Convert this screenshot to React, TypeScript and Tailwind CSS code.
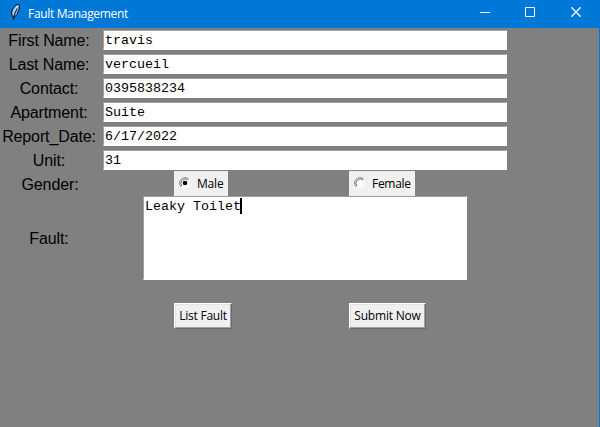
import type { ReactNode } from 'react';

const ui = "font-['Open_Sans','Noto_Sans',sans-serif] text-[12px] leading-4 whitespace-nowrap";
const mono = "font-['Liberation_Mono',monospace] text-[13.33px] leading-4 text-black whitespace-pre";

function Feather() {
  return (
    <svg width="16" height="28" viewBox="0 0 16 28" className="ml-[7px] shrink-0">
      <path d="M10 4.5h2l.5 1-.5 4-2 5-2.5 2.5h-2L4.500 14l.5-4L7.500 6.500Z" fill="#7fb0ea" stroke="#07111f" strokeWidth="1" />
      <path d="M10.500 6 8 10 6.500 14.500" fill="none" stroke="#d5e9ff" strokeWidth="1.200" />
      <path d="M10 8.500 7.500 14 6.500 20" fill="none" stroke="#07111f" strokeWidth="1" />
    </svg>
  );
}

function TitleBar() {
  return (
    <header className="flex h-7 items-center bg-[#0078d7] text-white">
      <Feather />
      <h1 className={`${ui} mb-px ml-[5px] w-[101px] tracking-[-0.3px]`}>Fault Management</h1>
      <div className="ml-auto flex" aria-label="Window controls">
        <svg width="138" height="28" viewBox="0 0 138 28" fill="none" stroke="white">
          <path d="M18 12.5h10" />
          <path d="M63.5 7.5h9v9h-9z" />
          <path d="m109.3 7.3 9.4 9.4m0-9.4-9.4 9.4" strokeWidth="1.3" />
        </svg>
      </div>
    </header>
  );
}

function Label({ children }: { children: ReactNode }) {
  return (
    <span className="w-[98px] shrink-0 pt-[2px] text-center font-['Liberation_Sans',Arial,sans-serif] text-[16px] leading-6 tracking-[-0.12px] whitespace-nowrap text-black">
      {children}
    </span>
  );
}

function Entry({ label, value }: { label: string; value: string }) {
  return (
    <div className="flex h-6 items-center">
      <Label>{label}</Label>
      <div className={`${mono} ml-[5px] h-5 w-[404px] border border-t-[#a0a0a0] border-l-[#a0a0a0] border-r-white border-b-white bg-white pl-px pt-[2px]`}>
        {value}
      </div>
    </div>
  );
}

function Radio({ on = false }: { on?: boolean }) {
  return (
    <svg width="12" height="12" viewBox="0 0 12 12" className="mb-px shrink-0">
      <circle cx="6" cy="6" r="5.500" fill="white" />
      <path d="M2.1 9.9A5.5 5.5 0 0 1 9.9 2.1" fill="none" stroke="#929292" />
      <path d="M2.900 9.100A4.400 4.400 0 0 1 9.100 2.900" fill="none" stroke="#646464" />
      <path d="M9.100 2.900A4.400 4.400 0 0 1 2.900 9.100" fill="none" stroke="#e3e3e3" strokeWidth=".6" />
      {on && <circle cx="6" cy="6" r="2.300" fill="black" />}
    </svg>
  );
}

const button = `${ui} flex h-[26px] items-center justify-center border-t border-l border-r border-b border-t-white border-l-white border-r-[#696969] border-b-[#696969] bg-[#f0f0f0] text-black shadow-[inset_-1px_-1px_0_#a0a0a0,inset_1px_1px_0_#e3e3e3]`;

export default function App() {
  return (
    <div className="flex h-[427px] w-[600px] flex-col overflow-hidden bg-[#0078d7]">
      <TitleBar />
      <main className="mr-px flex-1 bg-[#808080]">
        <Entry label="First Name:" value="travis" />
        <Entry label="Last Name:" value="vercueil" />
        <Entry label="Contact:" value="0395838234" />
        <Entry label="Apartment:" value="Suite" />
        <Entry label="Report_Date:" value="6/17/2022" />
        <Entry label="Unit:" value="31" />
        <div className="flex h-6 items-start">
          <div className="-mt-px flex w-[102px] shrink-0 pl-px"><Label>Gender:</Label></div>
          <div className={`${ui} ml-[72px] mt-[-1px] flex h-[25px] w-[54px] items-center bg-[#f0f0f0] pl-[5px] text-black`}>
            <Radio on />
            <span className="ml-[6px] mt-px tracking-[-0.2px]">Male</span>
          </div>
          <div className={`${ui} ml-[121px] mt-[-1px] flex h-[25px] w-[66px] items-center bg-[#f0f0f0] pl-[5px] text-black`}>
            <Radio />
            <span className="ml-[6px] mt-px tracking-[-0.3px]">Female</span>
          </div>
        </div>
        <div className="flex h-[84px] items-center">
          <Label>Fault:</Label>
          <div className={`${mono} ml-[45px] flex h-[84px] w-[324px] items-start border border-t-[#a0a0a0] border-l-[#a0a0a0] border-r-white border-b-white bg-white pl-px pt-[2px]`}>
            <span>Leaky Toilet</span>
            <span className="-ml-px -mt-px h-4 w-[2px] bg-black" />
          </div>
        </div>
        <div className="mt-[23px] flex">
          <button className={`${button} ml-[174px] w-[58px] tracking-[-0.25px]`}>List Fault</button>
          <button className={`${button} ml-[117px] w-[77px] tracking-[-0.2px]`}>Submit Now</button>
        </div>
      </main>
    </div>
  );
}
